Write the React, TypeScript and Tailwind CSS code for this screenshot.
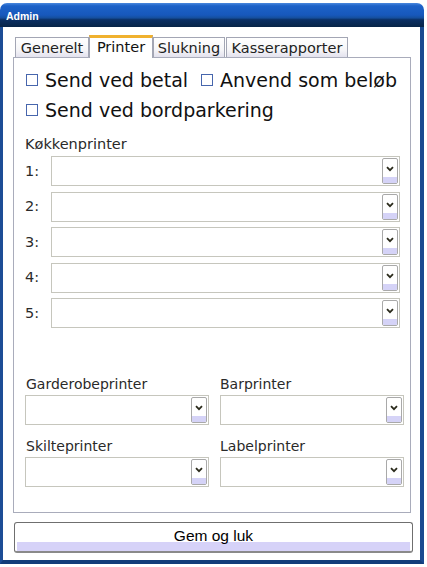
import React from 'react'

const tabs = [
  { label: 'Generelt', w: 'w-[74px]' },
  { label: 'Printer', w: 'w-[64px]', active: true },
  { label: 'Slukning', w: 'w-[72px]' },
  { label: 'Kasserapporter', w: 'w-[122px] ml-[1px]' },
]

function Chevron() {
  return (
    <svg width="8" height="6" viewBox="0 0 8 6" className="block">
      <path d="M1 1.2 L4 4.2 L7 1.2" fill="none" stroke="#2b2b1c" strokeWidth="1.8" />
    </svg>
  )
}

function Dropdown({ className = '' }: { className?: string }) {
  return (
    <div className={`flex h-[30px] border border-[#c6c6bd] bg-white p-px ${className}`}>
      <div className="flex-1" />
      <div className="flex w-[16px] flex-col overflow-hidden rounded-[2px] border border-[#a9a9a9] bg-white">
        <div className="flex flex-1 items-center justify-center pt-[2px]">
          <Chevron />
        </div>
        <div className="h-[6px] bg-[#d5d3f7]" />
      </div>
    </div>
  )
}

function Check({ label, className = '' }: { label: string; className?: string }) {
  return (
    <label className={`flex h-[24px] items-center gap-[7px] text-[19px] leading-[24px] text-[#111] ${className}`}>
      <span className="block h-[12px] w-[12px] border border-[#4766ad] bg-white" />
      {label}
    </label>
  )
}

export default function App() {
  return (
    <div className="h-[567px] w-[427px] overflow-hidden bg-white pt-[3px] font-['DejaVu_Sans',Verdana,sans-serif]">
      <div className="w-[424px] overflow-hidden rounded-t-[7px]">
        {/* title bar */}
        <div className="h-[24px] bg-[linear-gradient(to_bottom,#4a88de_0%,#1d62c8_12%,#1758bc_50%,#154f9e_62%,#0b2f63_70%,#072447_100%)] pl-[6px] pt-[7px]">
          <span className="block font-['Liberation_Sans',Arial,sans-serif] text-[10.5px] font-bold leading-[12px] text-white">
            Admin
          </span>
        </div>

        <div className="flex flex-col border-x-[3px] border-b-[4px] border-r-[4px] border-l-[#1c4d96] border-r-[#1a4a90] border-b-[#123d7a] bg-white pb-[7px] pl-[10px] pr-[9px] pt-[8px]">
          {/* tabs */}
          <div className="flex h-[22px] items-end pl-[2px]">
            {tabs.map((t) =>
              t.active ? (
                <div
                  key={t.label}
                  className={`relative z-10 mb-[-1px] flex h-[23px] items-start justify-center border-x border-[#a3a6b4] border-t-[3px] border-t-[#f0b12e] bg-white pt-[1px] text-[14.5px] leading-[17px] text-[#111] ${t.w}`}
                >
                  {t.label}
                </div>
              ) : (
                <div
                  key={t.label}
                  className={`flex h-[20px] items-start justify-center border-x border-t border-[#a3a6b4] bg-[linear-gradient(to_bottom,#ffffff_0%,#f6f6f8_60%,#e3e2ee_100%)] pt-[2px] text-[14.5px] leading-[17px] text-[#222] ${t.w}`}
                >
                  {t.label}
                </div>
              )
            )}
          </div>

          {/* panel */}
          <div className="flex h-[456px] flex-col border border-[#a9acbb] bg-white pt-[10px]">
            <div className="flex pl-[12px]">
              <Check label="Send ved betal" />
              <Check label="Anvend som beløb" className="ml-[13px]" />
            </div>
            <div className="mt-[6px] flex pl-[12px]">
              <Check label="Send ved bordparkering" />
            </div>

            <div className="mt-[14px] pl-[11px] text-[14.5px] leading-[17px] text-[#2a2a2a]">Køkkenprinter</div>
            <div className="mt-[3px] flex flex-col gap-[5.5px] pl-[11px] pr-[10px]">
              {[1, 2, 3, 4, 5].map((n) => (
                <div key={n} className="flex items-center">
                  <span className="w-[26px] text-[14.5px] leading-[17px] text-[#2a2a2a]">{n}:</span>
                  <Dropdown className="flex-1" />
                </div>
              ))}
            </div>

            <div className="mt-[48px] grid grid-cols-[184px_184px] gap-x-[11px] pl-[11px]">
              <div className="flex flex-col">
                <span className="pl-px text-[14px] leading-[17px] text-[#2a2a2a]">Garderobeprinter</span>
                <Dropdown className="mt-[2px]" />
              </div>
              <div className="flex flex-col">
                <span className="text-[14px] leading-[17px] text-[#2a2a2a]">Barprinter</span>
                <Dropdown className="mt-[2px]" />
              </div>
              <div className="mt-[12.5px] flex flex-col">
                <span className="pl-px text-[14px] leading-[17px] text-[#2a2a2a]">Skilteprinter</span>
                <Dropdown className="mt-[2.5px]" />
              </div>
              <div className="mt-[12.5px] flex flex-col">
                <span className="text-[14px] leading-[17px] text-[#2a2a2a]">Labelprinter</span>
                <Dropdown className="mt-[2.5px]" />
              </div>
            </div>
          </div>

          {/* save button */}
          <button className="relative ml-px mt-[9px] h-[31px] w-[399px] rounded-[3px] border border-b-2 border-[#6f6f6f] border-b-[#8a8a8a] bg-white">
            <span className="absolute bottom-0 left-[2px] right-[2px] h-[9px] bg-[#d6d2f8]" />
            <span className="relative block h-full pt-[5px] text-center font-['Liberation_Sans',Arial,sans-serif] text-[15.5px] leading-[16px] text-black">
              Gem og luk
            </span>
          </button>
        </div>
      </div>
    </div>
  )
}
